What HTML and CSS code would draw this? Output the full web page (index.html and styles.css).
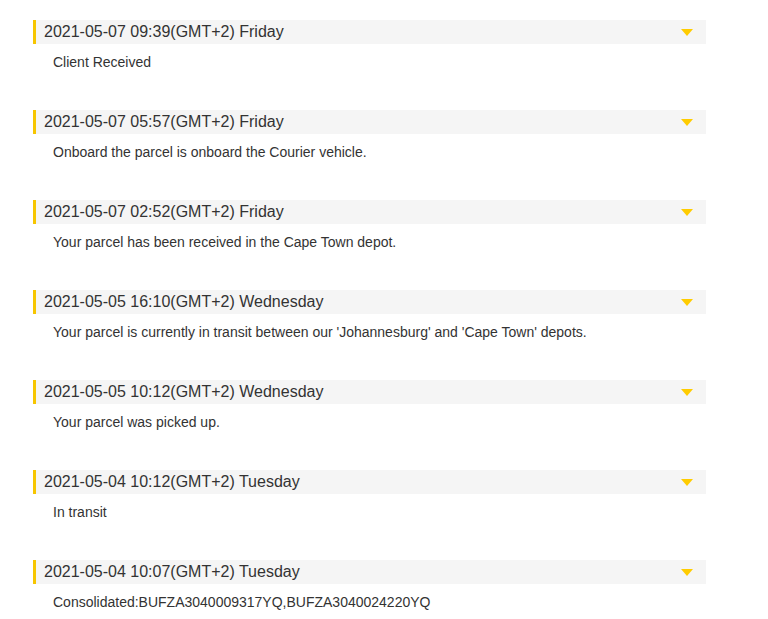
FILE: index.html
```html
<!DOCTYPE html>
<html>
<head>
<meta charset="utf-8">
<link rel="stylesheet" href="styles.css">
</head>
<body>
<div class="timeline">
  <div class="item">
    <div class="head"><span class="date">2021-05-07 09:39(GMT+2) Friday</span><span class="arrow"></span></div>
    <div class="desc">Client Received</div>
  </div>
  <div class="item">
    <div class="head"><span class="date">2021-05-07 05:57(GMT+2) Friday</span><span class="arrow"></span></div>
    <div class="desc">Onboard the parcel is onboard the Courier vehicle.</div>
  </div>
  <div class="item">
    <div class="head"><span class="date">2021-05-07 02:52(GMT+2) Friday</span><span class="arrow"></span></div>
    <div class="desc">Your parcel has been received in the Cape Town depot.</div>
  </div>
  <div class="item">
    <div class="head"><span class="date">2021-05-05 16:10(GMT+2) Wednesday</span><span class="arrow"></span></div>
    <div class="desc">Your parcel is currently in transit between our 'Johannesburg' and 'Cape Town' depots.</div>
  </div>
  <div class="item">
    <div class="head"><span class="date">2021-05-05 10:12(GMT+2) Wednesday</span><span class="arrow"></span></div>
    <div class="desc">Your parcel was picked up.</div>
  </div>
  <div class="item">
    <div class="head"><span class="date">2021-05-04 10:12(GMT+2) Tuesday</span><span class="arrow"></span></div>
    <div class="desc">In transit</div>
  </div>
  <div class="item">
    <div class="head"><span class="date">2021-05-04 10:07(GMT+2) Tuesday</span><span class="arrow"></span></div>
    <div class="desc">Consolidated:BUFZA3040009317YQ,BUFZA3040024220YQ</div>
  </div>
</div>
</body>
</html>
```
FILE: styles.css
```css
html, body {
  margin: 0;
  padding: 0;
  background: #fff;
  font-family: "Liberation Sans", Arial, sans-serif;
  color: #333;
}
.timeline {
  padding: 20px 0 0 33px;
  width: 673px;
}
.item {
  margin-bottom: 40px;
}
.item:last-child {
  margin-bottom: 0;
}
.head {
  display: flex;
  align-items: center;
  justify-content: space-between;
  height: 24px;
  background: #f5f5f5;
  border-left: 3px solid #f7c600;
  padding: 0 13px 0 8px;
  font-size: 16px;
  color: #333;
}
.arrow {
  width: 0;
  height: 0;
  border-left: 6px solid transparent;
  border-right: 6px solid transparent;
  border-top: 7px solid #ffcc00;
}
.desc {
  padding: 10px 0 0 20px;
  line-height: 16px;
  font-size: 14px;
}
```
